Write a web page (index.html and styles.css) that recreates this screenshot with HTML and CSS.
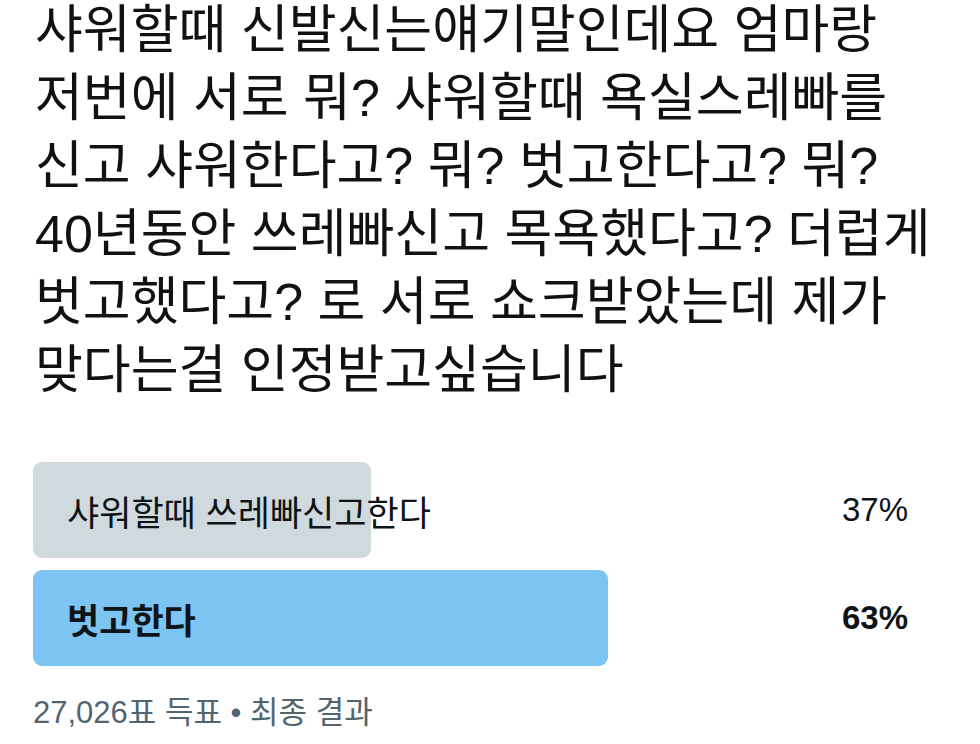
FILE: index.html
```html
<!DOCTYPE html>
<html lang="ko">
<head>
<meta charset="utf-8">
<link rel="stylesheet" href="styles.css">
</head>
<body>
<main class="tweet">
  <p class="question">샤워할때 신발신는얘기말인데요 엄마랑<br>저번에 서로 뭐? 샤워할때 욕실스레빠를<br>신고 샤워한다고? 뭐? 벗고한다고? 뭐?<br>40년동안 쓰레빠신고 목욕했다고? 더럽게<br>벗고했다고? 로 서로 쇼크받았는데 제가<br>맞다는걸 인정받고싶습니다</p>
  <div class="poll">
    <div class="option">
      <div class="bar bar-gray" style="width:37%"></div>
      <span class="label">샤워할때 쓰레빠신고한다</span>
      <span class="pct">37%</span>
    </div>
    <div class="option winner">
      <div class="bar bar-blue" style="width:63%"></div>
      <span class="label">벗고한다</span>
      <span class="pct">63%</span>
    </div>
  </div>
  <p class="meta">27,026표 득표 • 최종 결과</p>
</main>
</body>
</html>
```
FILE: styles.css
```css
html, body {
  margin: 0;
  padding: 0;
  background: #ffffff;
}
body {
  font-family: "Liberation Sans", "Noto Sans CJK KR", sans-serif;
  color: #0f1419;
  width: 980px;
  height: 744px;
  overflow: hidden;
}
.tweet {
  padding: 0 0 0 33px;
}
.question {
  margin: -4px 0 0;
  padding-left: 2px;
  font-size: 52px;
  line-height: 68px;
  white-space: nowrap;
  color: #111111;
}
.poll {
  margin-top: 58px;
  display: flex;
  flex-direction: column;
  gap: 12px;
  width: 913px;
}
.option {
  position: relative;
  height: 96px;
  display: flex;
  align-items: center;
  justify-content: space-between;
  padding: 0 38px 0 34px;
}
.bar {
  position: absolute;
  left: 0;
  top: 0;
  bottom: 0;
  border-radius: 9px;
  z-index: 0;
}
.bar-gray { background: #cfd9de; }
.bar-blue { background: #7cc4f2; }
.label, .pct {
  position: relative;
  z-index: 1;
}
.label {
  font-size: 35px;
  color: #0f1419;
}
.pct {
  font-size: 33px;
  color: #0f1419;
}
.winner .label, .winner .pct {
  font-weight: 700;
}
.meta {
  margin: 21px 0 0;
  font-size: 31px;
  color: #536471;
}
```
